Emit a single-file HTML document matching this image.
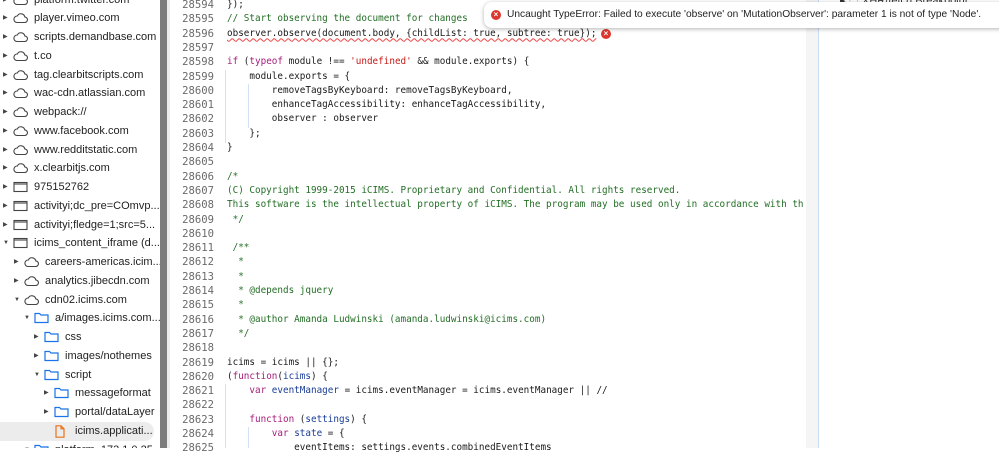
<!DOCTYPE html>
<html><head><meta charset="utf-8">
<style>
*{margin:0;padding:0;box-sizing:border-box}
body{width:999px;height:448px;overflow:hidden;background:#fff;position:relative;font-family:"Liberation Sans",sans-serif}
#side{position:absolute;left:0;top:0;width:160px;height:448px;background:#fff;overflow:hidden}
.row{position:absolute;left:0;height:19px;width:160px;font-size:11px;color:#1f1f1f;line-height:19px;white-space:nowrap}
.row .ar{position:absolute;top:0;font-size:6px;color:#444}
.row .t{position:absolute;top:0}
.sel{position:absolute;left:0;top:422px;width:154px;height:19px;background:#ececec;border-radius:0 10px 10px 0}
#bar{position:absolute;left:160px;top:0;width:7px;height:448px;background:#7c7c7c}
#bar2{position:absolute;left:167px;top:0;width:3px;height:448px;background:#ececec}
#ed{position:absolute;left:170px;top:0;width:636px;height:448px;background:#fff}
.ln{position:absolute;left:170px;width:44px;text-align:right;font-family:"DejaVu Sans Mono",monospace;font-size:10.6px;color:#6a6a6a;height:14.3px;line-height:14.3px}
.cd{position:absolute;left:227px;font-family:"DejaVu Sans Mono",monospace;font-size:9.3px;color:#1a1a1a;white-space:pre;height:14.3px;line-height:14.3px}
.c{color:#236e25}.k{color:#a51d7b}.s{color:#c41a16}.v{color:#1a3c96}
.guide{position:absolute;width:1px;background:#d3e0f5}
#rg{position:absolute;left:806px;top:0;width:12px;height:448px;background:#f5f5f5}
#rl{position:absolute;left:818px;top:0;width:1px;height:448px;background:#c9dcf7}
#tip{position:absolute;left:484px;top:2px;width:525px;height:26px;background:#fff;border-radius:8px;box-shadow:0 1px 4px rgba(0,0,0,.3);font-size:10.2px;color:#1f1f1f;line-height:26px;padding-left:23px;white-space:nowrap}
.err{position:absolute;width:10px;height:10px;border-radius:50%;background:#dc362e;color:#fff;font-size:8px;line-height:10px;text-align:center;font-weight:bold}
.squig{text-decoration:underline wavy #e44;text-decoration-thickness:1px;text-underline-offset:2px}
</style></head><body>
<div id="side">
<div class="sel"></div>
</div>
<div id="bar"></div><div id="bar2"></div>
<div id="ed"></div>
<div id="rg"></div><div id="rl"></div>
<div style="position:absolute;left:840px;top:-6px;font-size:11px;color:#333">▸ ⬚ XHR/fetch Breakpoint</div>
<script>
var side=document.getElementById('side');
var cloud='<svg width="15" height="12" viewBox="0 0 15 12"><path d="M4 10.5h7.5a2.8 2.8 0 0 0 .3-5.6A4 4 0 0 0 4.3 4 3.2 3.2 0 0 0 4 10.5z" fill="none" stroke="#444" stroke-width="1.1"/></svg>';
var frame='<svg width="15" height="12" viewBox="0 0 15 12"><rect x="1" y="1.5" width="13" height="9" fill="none" stroke="#444" stroke-width="1.1"/><line x1="1" y1="3" x2="14" y2="3" stroke="#444" stroke-width="1.1"/></svg>';
var folder='<svg width="15" height="12" viewBox="0 0 15 12"><path d="M1 1.5h4.5l1.5 1.5h7v7.5h-13z" fill="none" stroke="#1a73e8" stroke-width="1.2"/></svg>';
var file='<svg width="12" height="13" viewBox="0 0 12 13"><path d="M2 .8h5l3 3v8.4h-8z M7 .8v3h3" fill="none" stroke="#e8711a" stroke-width="1.2"/></svg>';
var rows=[
['platform.twitter.com',0,cloud,'r'],['player.vimeo.com',0,cloud,'r'],['scripts.demandbase.com',0,cloud,'r'],['t.co',0,cloud,'r'],
['tag.clearbitscripts.com',0,cloud,'r'],['wac-cdn.atlassian.com',0,cloud,'r'],['webpack://',0,cloud,'r'],['www.facebook.com',0,cloud,'r'],
['www.redditstatic.com',0,cloud,'r'],['x.clearbitjs.com',0,cloud,'r'],['975152762',0,frame,'r'],['activityi;dc_pre=COmvp...',0,frame,'r'],
['activityi;fledge=1;src=5...',0,frame,'r'],['icims_content_iframe (d...',0,frame,'d'],['careers-americas.icim...',1,cloud,'r'],
['analytics.jibecdn.com',1,cloud,'r'],['cdn02.icims.com',1,cloud,'d'],['a/images.icims.com...',2,folder,'d'],['css',3,folder,'r'],
['images/nothemes',3,folder,'r'],['script',3,folder,'d'],['messageformat',4,folder,'r'],['portal/dataLayer',4,folder,'r'],
['icims.applicati...',4,file,''],['platform_173.1.0.25',2,folder,'d']];
var h='';
rows.forEach(function(r,i){
 var y=Math.round(18.75*i-9.5), ind=r[1]*10+(r[1]>0?1:0);
 var ar=r[3]=='r'?'▶':(r[3]=='d'?'▼':'');
 h+='<div class="row" style="top:'+y+'px"><span class="ar" style="left:'+(3+ind)+'px">'+ar+'</span><span style="position:absolute;left:'+(13+ind)+'px;top:0">'+r[2].replace('<svg','<svg style="position:absolute;top:3px"')+'</span><span class="t" style="left:'+(34+ind)+'px">'+r[0]+'</span></div>';
});
side.innerHTML+=h;
var code=[
'});',
'<span class="c">// Start observing the document for changes</span>',
'<span class="squig">observer.observe(document.body, {childList: true, subtree: true});</span>',
'',
'<span class="k">if</span> (<span class="k">typeof</span> module !== <span class="s">\'undefined\'</span> &amp;&amp; module.exports) {',
'    module.exports = {',
'        removeTagsByKeyboard: removeTagsByKeyboard,',
'        enhanceTagAccessibility: enhanceTagAccessibility,',
'        observer : observer',
'    };',
'}',
'',
'<span class="c">/*</span>',
'<span class="c">(C) Copyright 1999-2015 iCIMS. Proprietary and Confidential. All rights reserved.</span>',
'<span class="c">This software is the intellectual property of iCIMS. The program may be used only in accordance with th</span>',
'<span class="c"> */</span>',
'',
'<span class="c"> /**</span>',
'<span class="c">  *</span>',
'<span class="c">  *</span>',
'<span class="c">  * @depends jquery</span>',
'<span class="c">  *</span>',
'<span class="c">  * @author Amanda Ludwinski (amanda.ludwinski@icims.com)</span>',
'<span class="c">  */</span>',
'',
'icims = icims || {};',
'(<span class="k">function</span>(<span class="v">icims</span>) {',
'    <span class="k">var</span> <span class="v">eventManager</span> = icims.eventManager = icims.eventManager || //',
'',
'    <span class="k">function</span> (<span class="v">settings</span>) {',
'        <span class="k">var</span> <span class="v">state</span> = {',
'            eventItems: settings.events.combinedEventItems'];
var o='';
code.forEach(function(c,i){
 var y=(-2+14.3*i).toFixed(1);
 o+='<div class="ln" style="top:'+y+'px">'+(28594+i)+'</div><div class="cd" style="top:'+y+'px">'+c+'</div>';
});
o+='<div class="guide" style="left:225px;top:70px;height:73px"></div>';
o+='<div class="guide" style="left:248px;top:84px;height:44px"></div>';
o+='<div class="guide" style="left:225px;top:384px;height:64px"></div>';
o+='<div class="guide" style="left:248px;top:427px;height:21px"></div>';
o+='<div class="err" style="left:601px;top:29px">×</div>';
document.body.insertAdjacentHTML('beforeend',o);
</script>
<div id="tip"><div class="err" style="left:7px;top:8px">×</div>Uncaught TypeError: Failed to execute 'observe' on 'MutationObserver': parameter 1 is not of type 'Node'.</div>
</body></html>
